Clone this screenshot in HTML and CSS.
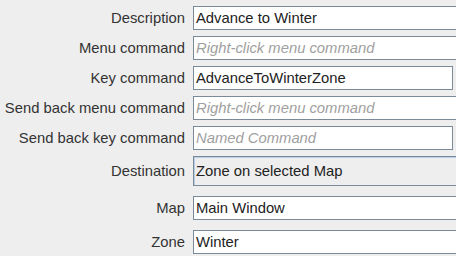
FILE: index.html
```html
<!DOCTYPE html>
<html>
<head>
    <meta charset="UTF-8">
    <title>Zone Action</title>
    <link rel="stylesheet" href="styles.css">
</head>
<body>
    <div class="form">
        <div class="row">
            <label class="label">Description</label>
            <div class="field wide">Advance to Winter</div>
        </div>
        <div class="row">
            <label class="label">Menu command</label>
            <div class="field wide placeholder">Right-click menu command</div>
        </div>
        <div class="row">
            <label class="label">Key command</label>
            <div class="field short">AdvanceToWinterZone</div>
        </div>
        <div class="row">
            <label class="label">Send back menu command</label>
            <div class="field wide placeholder">Right-click menu command</div>
        </div>
        <div class="row">
            <label class="label">Send back key command</label>
            <div class="field short placeholder">Named Command</div>
        </div>
        <div class="row">
            <label class="label">Destination</label>
            <div class="field wide combo">Zone on selected Map</div>
        </div>
        <div class="row spaced">
            <label class="label">Map</label>
            <div class="field wide">Main Window</div>
        </div>
        <div class="row spaced">
            <label class="label">Zone</label>
            <div class="field wide">Winter</div>
        </div>
    </div>
</body>
</html>
```

FILE: styles.css
```css
html, body {
    margin: 0;
    padding: 0;
    background: #eeeeee;
    overflow: hidden;
}
body {
    font-family: "Liberation Sans", Arial, sans-serif;
    font-size: 14.8px;
    color: #333333;
    width: 456px;
    height: 256px;
}
.form {
    display: flex;
    flex-direction: column;
    gap: 6px;
    padding-top: 6px;
}
.row {
    display: flex;
    align-items: center;
    gap: 8px;
}
.row.spaced {
    margin-top: 4px;
}
.label {
    width: 185px;
    text-align: right;
    white-space: nowrap;
    flex-shrink: 0;
}
.field {
    box-sizing: border-box;
    height: 24px;
    line-height: 22px;
    padding: 0 2px;
    background: #ffffff;
    border: 1px solid #7a8a99;
    color: #222222;
    white-space: nowrap;
    overflow: hidden;
}
.field.wide {
    width: 263px;
    border-right: none;
}
.field.short {
    width: 260px;
}
.placeholder {
    color: #a0a0a0;
    font-style: italic;
}
.combo {
    height: 30px;
    line-height: 28px;
    background: #eeeeee;
    box-shadow: inset 0 1px 0 #b8cfe5, inset 1px 0 0 #b8cfe5;
}
```
